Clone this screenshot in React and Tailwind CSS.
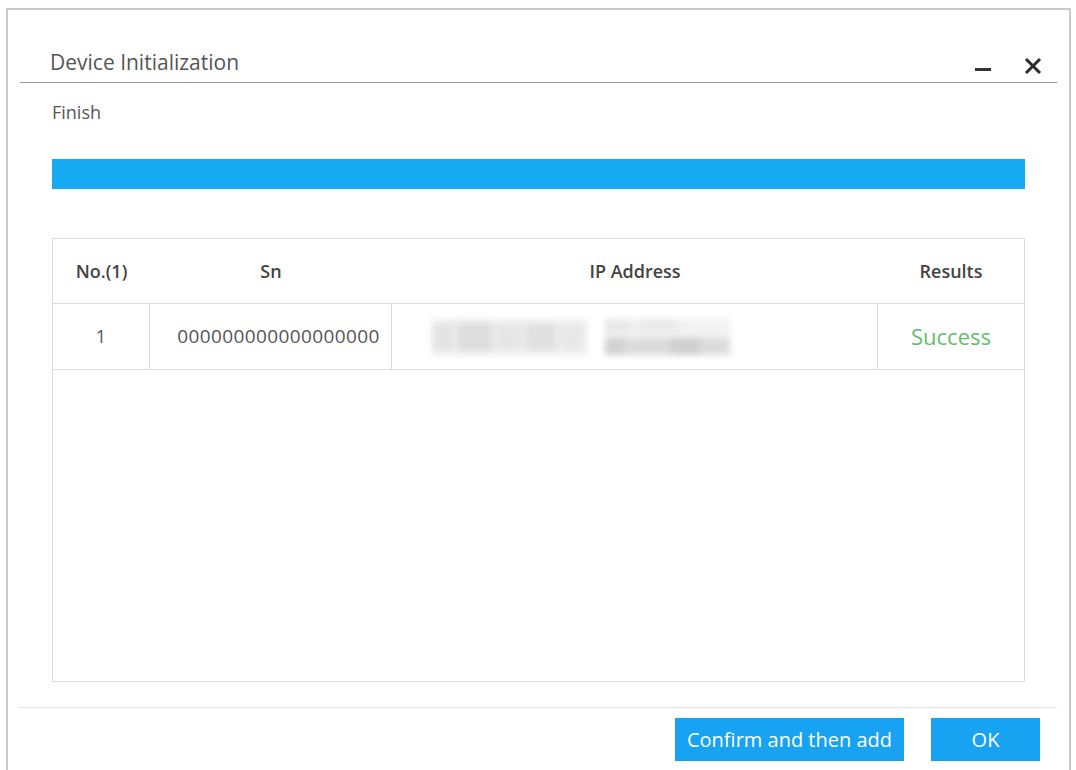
import React from "react";

const FONT = { fontFamily: "'Open Sans', Lato, 'Liberation Sans', sans-serif" };

function BlurredAddress() {
  // masked address, shown as soft blocks
  return (
    <div className="flex items-center gap-[18px] blur-[3px]">
      <div className="flex h-[36px] w-[155px] items-center gap-[4px] bg-[#efefef]">
        <div className="h-[26px] w-[22px] bg-[#e4e4e4]" />
        <div className="h-[28px] w-[34px] bg-[#dddddd]" />
        <div className="h-[24px] w-[26px] bg-[#e6e6e6]" />
        <div className="h-[26px] w-[30px] bg-[#e0e0e0]" />
        <div className="h-[22px] w-[24px] bg-[#e8e8e8]" />
      </div>
      <div className="flex h-[36px] w-[125px] flex-col justify-between">
        <div className="flex h-[16px] gap-[6px] bg-[#f2f2f2]">
          <div className="h-[14px] w-[26px] bg-[#e8e8e8]" />
          <div className="h-[14px] w-[40px] bg-[#eaeaea]" />
        </div>
        <div className="flex h-[18px] w-[125px] bg-[#dcdcdc]">
          <div className="h-[18px] w-[20px] bg-[#d2d2d2]" />
          <div className="h-[18px] w-[45px]" />
          <div className="h-[18px] w-[30px] bg-[#d0d0d0]" />
        </div>
      </div>
    </div>
  );
}

export default function App() {
  return (
    <div className="h-[770px] w-[1076px] overflow-hidden bg-white" style={FONT}>
      <div className="ml-[6px] mt-[8px] flex h-[764px] w-[1065px] flex-col border-2 border-[#c9c9c9] bg-white">
        {/* title bar */}
        <div className="mx-[12px] flex h-[73px] items-end justify-between border-b border-[#9a9a9a]">
          <div className="pb-[6px] pl-[30px] text-[21px] leading-[28px] text-[#555]">Device Initialization</div>
          <div className="flex items-end gap-[33px] pb-[7px] pr-[15px]">
            <div className="mb-[4px] h-[3px] w-[16px] bg-[#333]" />
            <svg width="18" height="18" viewBox="0 0 18 18">
              <path d="M2 2 L16 16 M16 2 L2 16" stroke="#2a2a2a" strokeWidth="3" strokeLinecap="butt" />
            </svg>
          </div>
        </div>

        {/* body */}
        <div className="flex flex-col px-[44px]">
          <div className="mt-[16px] text-[18px] leading-[26px] text-[#555]">Finish</div>
          <div className="mt-[34px] h-[30px] w-full bg-[#17a9f1]" />

          <div className="mt-[49px] flex h-[444px] flex-col border border-[#dcdcdc]">
            <div className="flex h-[65px] items-center border-b border-[#dcdcdc] text-[18px] font-semibold text-[#444]">
              <div className="w-[97px] text-center">No.(1)</div>
              <div className="w-[242px] text-center">Sn</div>
              <div className="w-[486px] text-center">IP Address</div>
              <div className="flex-1 text-center">Results</div>
            </div>
            <div className="flex h-[66px] items-stretch border-b border-[#dcdcdc] text-[#555]">
              <div className="flex w-[97px] items-center justify-center border-r border-[#dcdcdc] text-[18px]">1</div>
              <div className="flex w-[242px] items-center justify-center border-r border-[#dcdcdc] pl-[16px] text-[19px] tracking-[0.4px]">
                000000000000000000
              </div>
              <div className="flex w-[486px] items-center justify-start border-r border-[#dcdcdc] pl-[40px]">
                <BlurredAddress />
              </div>
              <div className="flex flex-1 items-center justify-center text-[22px] text-[#62be6a]">Success</div>
            </div>
          </div>
        </div>

        {/* footer */}
        <div className="mx-[10px] mr-[12px] mt-[25px] border-t border-[#e3e3e3]" />
        <div className="mt-[10px] flex justify-end gap-[27px] pr-[29px]">
          <button className="h-[43px] w-[229px] bg-[#18a3f2] text-[20px] text-white">Confirm and then add</button>
          <button className="h-[43px] w-[109px] bg-[#18a3f2] text-[20px] text-white">OK</button>
        </div>
      </div>
    </div>
  );
}
